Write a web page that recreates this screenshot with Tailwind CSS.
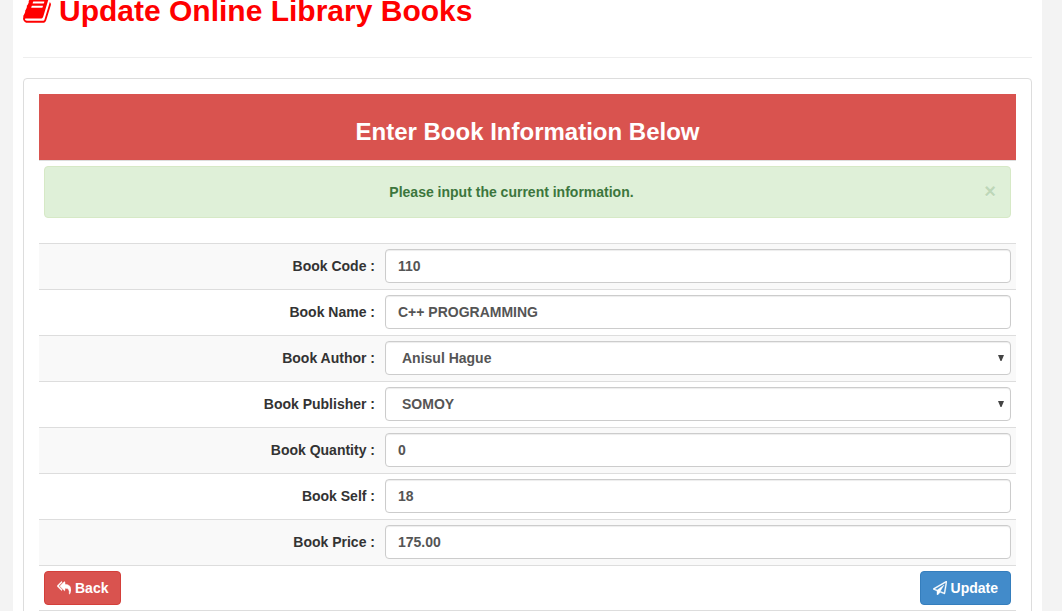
<!DOCTYPE html>
<html lang="en">
<head>
<meta charset="utf-8">
<meta name="viewport" content="width=device-width, initial-scale=1">
<title>Update Online Library Books</title>
<script src="https://cdn.jsdelivr.net/npm/@tailwindcss/browser@4"></script>
</head>
<body class="bg-[#f3f3f3] font-['Liberation_Sans',Arial,sans-serif] text-[14px] leading-[20px] text-[#333]">
<main class="ml-[13px] mr-[20px] min-h-screen bg-white px-[10px] pb-[20px]">
  <header class="-mt-[6px] border-b border-[#eee] pb-[30px]">
    <h1 class="flex items-start gap-[8px] text-[30px] leading-[33px] font-bold text-[#f00]">
      <svg class="mt-px h-[30px] w-[28px] shrink-0" viewBox="64 0 1664 1792" fill="currentColor" aria-hidden="true"><path d="M1703 478q40 57 18 129l-275 906q-19 64-76.500 107.500t-122.500 43.500h-923q-77 0-148.500-53.500t-99.500-131.500q-24-67-2-127 0-4 3-27t4-37q1-8-3-21.500t-3-19.500q2-11 8-21t16.500-23.500 16.500-23.500q23-38 45-91.500t30-91.500q3-10 .5-30t-.5-28q3-11 17-28t17-23q21-36 42-92t25-90q1-9-2.500-32t.5-28q4-13 22-30.500t22-22.500q19-26 42.500-84.500t27.500-96.500q1-8-3-25.500t-2-26.500q2-8 9-18t18-23 17-21q8-12 16.500-30.500t15-35 16-36 19.500-32 26.500-23.500 36-11.500 47.500 5.500l-1 3q38-9 51-9h761q74 0 114 56t18 130l-274 906q-36 119-71.500 153.500t-128.500 34.500h-869q-27 0-38 15-11 16-1 43 24 70 144 70h923q29 0 56-15.500t35-41.500l300-987q7-22 5-57 38 15 59 43zm-1064 2q-4 13 2 22.500t20 9.500h608q13 0 25.500-9.500t16.500-22.500l21-64q4-13-2-22.500t-20-9.500h-608q-13 0-25.500 9.500t-16.500 22.500zm-83 256q-4 13 2 22.500t20 9.500h608q13 0 25.500-9.500t16.500-22.500l21-64q4-13-2-22.500t-20-9.500h-608q-13 0-25.500 9.500t-16.500 22.500z"/></svg>
      <span>Update Online Library Books</span>
    </h1>
  </header>

  <form class="mt-[20px] rounded-[4px] border border-[#ddd] p-[15px]">
    <h2 class="bg-[#d9534f] px-[5px] pt-[25px] pb-[15px] text-center text-[24px] leading-[26px] font-bold text-white">Enter Book Information Below</h2>

    <div class="border-t border-[#ddd] px-[5px] pt-[5px] pb-[25px]">
      <div role="alert" class="flex items-start gap-[21px] rounded-[4px] border border-[#d6e9c6] bg-[#dff0d8] py-[15px] pr-[14px] pl-[15px] text-[#3c763d]">
        <strong class="flex-1 text-center">Please input the current information.</strong>
        <button type="button" aria-label="Close" class="w-[12px] text-[20px] leading-[18px] font-bold text-[#3c763d] opacity-20 [text-shadow:0_1px_0_#fff]">&times;</button>
      </div>
    </div>

    <table class="w-full table-fixed border-collapse">
      <colgroup><col class="w-[341px]"><col></colgroup>
      <tbody>
        <tr class="border-t border-[#ddd] odd:bg-[#f9f9f9]">
          <th class="px-[5px] pt-[5px] pb-[6px] text-right font-bold"><label for="code">Book Code :</label></th>
          <td class="px-[5px] pt-[5px] pb-[6px]"><input id="code" type="text" value="110" class="block h-[34px] w-full rounded-[4px] border border-[#ccc] bg-white px-[12px] font-bold text-[#555] shadow-[inset_0_1px_1px_rgba(0,0,0,0.075)]"></td>
        </tr>
        <tr class="border-t border-[#ddd] odd:bg-[#f9f9f9]">
          <th class="px-[5px] pt-[5px] pb-[6px] text-right font-bold"><label for="name">Book Name :</label></th>
          <td class="px-[5px] pt-[5px] pb-[6px]"><input id="name" type="text" value="C++ PROGRAMMING" class="block h-[34px] w-full rounded-[4px] border border-[#ccc] bg-white px-[12px] font-bold text-[#555] shadow-[inset_0_1px_1px_rgba(0,0,0,0.075)]"></td>
        </tr>
        <tr class="border-t border-[#ddd] odd:bg-[#f9f9f9]">
          <th class="px-[5px] pt-[5px] pb-[6px] text-right font-bold"><label for="author">Book Author :</label></th>
          <td class="px-[5px] pt-[5px] pb-[6px]">
            <div class="relative">
              <select id="author" class="block h-[34px] w-full appearance-none rounded-[4px] border border-[#ccc] bg-white px-[16px] font-bold text-[#555] shadow-[inset_0_1px_1px_rgba(0,0,0,0.075)]"><option>Anisul Hague</option></select>
              <svg class="pointer-events-none absolute top-[14px] right-[7px] h-[6px] w-[6px]" viewBox="0 0 6 6" fill="#444" aria-hidden="true"><path d="M0 0h6L3.500 6h-1z"/></svg>
            </div>
          </td>
        </tr>
        <tr class="border-t border-[#ddd] odd:bg-[#f9f9f9]">
          <th class="px-[5px] pt-[5px] pb-[6px] text-right font-bold"><label for="publisher">Book Publisher :</label></th>
          <td class="px-[5px] pt-[5px] pb-[6px]">
            <div class="relative">
              <select id="publisher" class="block h-[34px] w-full appearance-none rounded-[4px] border border-[#ccc] bg-white px-[16px] font-bold text-[#555] shadow-[inset_0_1px_1px_rgba(0,0,0,0.075)]"><option>SOMOY</option></select>
              <svg class="pointer-events-none absolute top-[14px] right-[7px] h-[6px] w-[6px]" viewBox="0 0 6 6" fill="#444" aria-hidden="true"><path d="M0 0h6L3.500 6h-1z"/></svg>
            </div>
          </td>
        </tr>
        <tr class="border-t border-[#ddd] odd:bg-[#f9f9f9]">
          <th class="px-[5px] pt-[5px] pb-[6px] text-right font-bold"><label for="quantity">Book Quantity :</label></th>
          <td class="px-[5px] pt-[5px] pb-[6px]"><input id="quantity" type="text" value="0" class="block h-[34px] w-full rounded-[4px] border border-[#ccc] bg-white px-[12px] font-bold text-[#555] shadow-[inset_0_1px_1px_rgba(0,0,0,0.075)]"></td>
        </tr>
        <tr class="border-t border-[#ddd] odd:bg-[#f9f9f9]">
          <th class="px-[5px] pt-[5px] pb-[6px] text-right font-bold"><label for="self">Book Self :</label></th>
          <td class="px-[5px] pt-[5px] pb-[6px]"><input id="self" type="text" value="18" class="block h-[34px] w-full rounded-[4px] border border-[#ccc] bg-white px-[12px] font-bold text-[#555] shadow-[inset_0_1px_1px_rgba(0,0,0,0.075)]"></td>
        </tr>
        <tr class="border-t border-[#ddd] odd:bg-[#f9f9f9]">
          <th class="px-[5px] pt-[5px] pb-[6px] text-right font-bold"><label for="price">Book Price :</label></th>
          <td class="px-[5px] pt-[5px] pb-[6px]"><input id="price" type="text" value="175.00" class="block h-[34px] w-full rounded-[4px] border border-[#ccc] bg-white px-[12px] font-bold text-[#555] shadow-[inset_0_1px_1px_rgba(0,0,0,0.075)]"></td>
        </tr>
      </tbody>
    </table>

    <div class="flex justify-between border-y border-[#ddd] p-[5px]">
      <button type="button" class="flex h-[34px] items-center gap-[4px] rounded-[4px] border border-[#d43f3a] bg-[#d9534f] px-[12px] font-bold text-white">
        <svg class="size-[14px]" viewBox="0 0 1792 1792" fill="currentColor" stroke="currentColor" stroke-width="50" aria-hidden="true"><path d="M640 1082v70q0 42-39 59-13 5-25 5-27 0-45-19l-512-512q-19-19-19-45t19-45l512-512q29-31 70-14 39 17 39 59v69l-397 398q-19 19-19 45t19 45zm1152 58q0 58-17 133.500t-38.500 138-48 125-40.500 90.500l-20 40q-8 17-28 17-6 0-9-1-25-8-23-34 43-400-106-565-64-71-170.500-110.500t-267.500-52.500v251q0 42-39 59-13 5-25 5-27 0-45-19l-512-512q-19-19-19-45t19-45l512-512q29-31 70-14 39 17 39 59v262q411 28 599 221 169 173 169 509z"/></svg>
        Back
      </button>
      <button type="submit" class="flex h-[34px] items-center gap-[4px] rounded-[4px] border border-[#357ebd] bg-[#428bca] px-[12px] font-bold text-white">
        <svg class="size-[14px]" viewBox="0 0 1792 1792" fill="currentColor" stroke="currentColor" stroke-width="50" aria-hidden="true"><path d="M1764 11q33 24 27 64l-256 1536q-5 29-32 45-14 8-31 8-11 0-24-5l-527-215-298 327q-18 21-47 21-14 0-23-4-19-7-30-23.500t-11-36.500v-452l-472-193q-37-14-40-55-3-39 32-59l1664-960q35-21 68 2zm-342 1499l221-1323-1434 827 336 137 863-639-478 797z"/></svg>
        Update
      </button>
    </div>
  </form>
</main>
</body>
</html>
